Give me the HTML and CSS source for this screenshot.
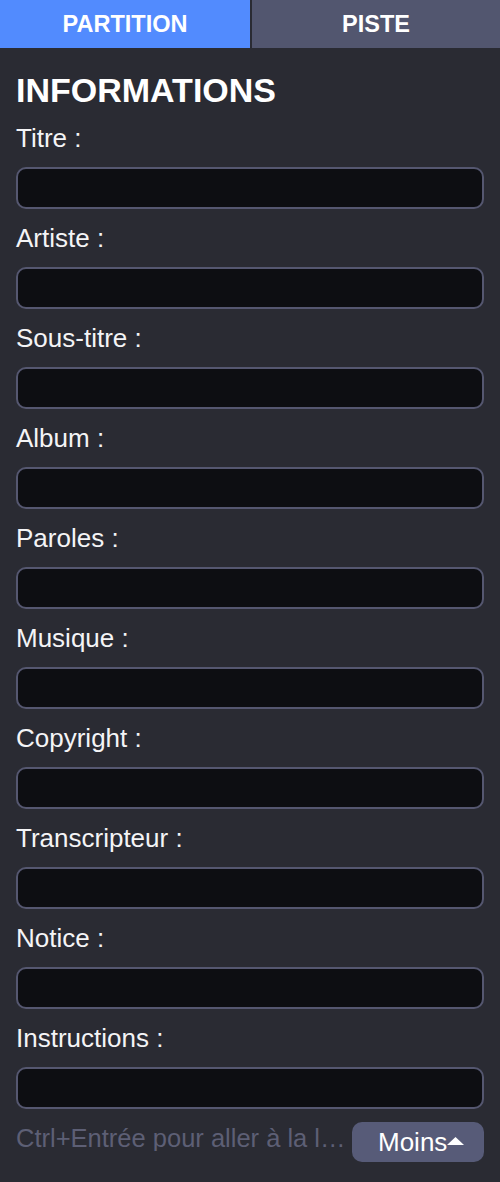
FILE: index.html
```html
<!DOCTYPE html>
<html lang="fr">
<head>
<meta charset="utf-8">
<title>Informations</title>
<link rel="stylesheet" href="styles.css">
</head>
<body>
<div class="tabs">
  <div class="tab tab-active">PARTITION</div>
  <div class="tab">PISTE</div>
</div>
<div class="panel">
  <h1 class="heading">INFORMATIONS</h1>
  <div class="fields">
    <div class="field"><label class="label">Titre :</label><input class="input" type="text"></div>
    <div class="field"><label class="label">Artiste :</label><input class="input" type="text"></div>
    <div class="field"><label class="label">Sous-titre :</label><input class="input" type="text"></div>
    <div class="field"><label class="label">Album :</label><input class="input" type="text"></div>
    <div class="field"><label class="label">Paroles :</label><input class="input" type="text"></div>
    <div class="field"><label class="label">Musique :</label><input class="input" type="text"></div>
    <div class="field"><label class="label">Copyright :</label><input class="input" type="text"></div>
    <div class="field"><label class="label">Transcripteur :</label><input class="input" type="text"></div>
    <div class="field"><label class="label">Notice :</label><input class="input" type="text"></div>
    <div class="field"><label class="label">Instructions :</label><input class="input" type="text"></div>
  </div>
  <div class="footer">
    <div class="hint">Ctrl+Entrée pour aller à la ligne suivante</div>
    <button class="btn" type="button"><span class="btn-text">Moins</span><svg class="tri" width="17" height="8" viewBox="0 0 17 8"><polygon points="0,8 17,8 8.5,0" fill="#ffffff"/></svg></button>
  </div>
</div>
</body>
</html>
```
FILE: styles.css
```css
html, body {
  margin: 0;
  padding: 0;
  background: #2a2b33;
}
body {
  font-family: "Liberation Sans", Arial, sans-serif;
  color: #ffffff;
  width: 500px;
  height: 1182px;
  overflow: hidden;
}
.tabs {
  display: grid;
  grid-template-columns: 250px 248px;
  column-gap: 2px;
  height: 48px;
}
.tab {
  background: #52566f;
  color: #ffffff;
  font-weight: bold;
  font-size: 23.5px;
  line-height: 48px;
  text-align: center;
}
.tab-active {
  background: #528bfe;
}
.panel {
  padding: 0 16px;
}
.heading {
  margin: 25px 0 0 0;
  font-size: 34px;
  line-height: 34px;
  font-weight: bold;
}
.fields {
  display: flex;
  flex-direction: column;
  gap: 17px;
  margin-top: 19px;
}
.field {
  display: flex;
  flex-direction: column;
  gap: 16px;
}
.label {
  font-size: 26px;
  line-height: 25px;
  color: #f4f4f6;
}
.input {
  box-sizing: border-box;
  display: block;
  width: 468px;
  height: 42px;
  margin: 0;
  background: #0d0e12;
  border: 2px solid #555770;
  border-radius: 10px;
  outline: none;
  padding: 0 12px;
  color: #ffffff;
  font-family: inherit;
  font-size: 22px;
}
.footer {
  display: flex;
  align-items: flex-start;
  margin-top: 13px;
  gap: 4px;
}
.hint {
  flex: 1;
  min-width: 0;
  font-size: 25.5px;
  line-height: 26px;
  padding-top: 3px;
  color: #5d5f75;
  white-space: nowrap;
  overflow: hidden;
  text-overflow: ellipsis;
}
.btn {
  box-sizing: border-box;
  width: 132px;
  height: 40px;
  flex: none;
  background: #575b78;
  border: none;
  border-radius: 10px;
  color: #ffffff;
  font-family: inherit;
  font-size: 26px;
  line-height: 40px;
  padding: 0 0 0 26px;
  display: flex;
  align-items: center;
}
.btn-text {
  display: block;
}
.tri {
  display: block;
  flex: none;
  margin-top: -2px;
}
```
